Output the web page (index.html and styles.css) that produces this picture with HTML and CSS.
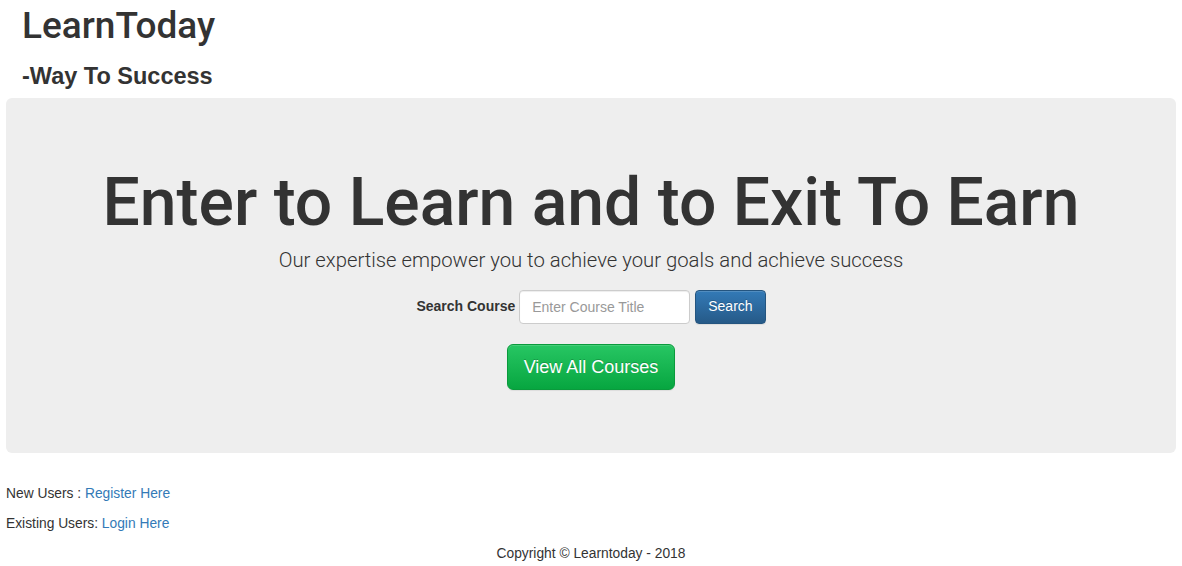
FILE: index.html
```html
<!DOCTYPE html>
<html>
<head>
<meta charset="utf-8">
<title>LearnToday</title>
<link rel="stylesheet" href="styles.css">
</head>
<body>
<header class="brand">
  <h1 class="brand-title">LearnToday</h1>
  <h3 class="brand-tag">-Way To Success</h3>
</header>
<section class="jumbotron">
  <h1 class="hero-title">Enter to Learn and to Exit To Earn</h1>
  <p class="hero-lead">Our expertise empower you to achieve your goals and achieve success</p>
  <form class="search-form">
    <label class="search-label" for="q">Search Course</label>
    <input class="search-input" id="q" type="text" placeholder="Enter Course Title">
    <button class="btn btn-primary" type="button">Search</button>
  </form>
  <div class="all-row">
    <a class="btn btn-success btn-lg" href="#">View All Courses</a>
  </div>
</section>
<footer class="foot">
  <p class="foot-line">New Users : <a href="#">Register Here</a></p>
  <p class="foot-line">Existing Users: <a href="#">Login Here</a></p>
  <p class="foot-copy">Copyright © Learntoday - 2018</p>
</footer>
</body>
</html>
```
FILE: styles.css
```css
* { box-sizing: border-box; }
html, body { margin: 0; padding: 0; }
body {
  font-family: "Liberation Sans", Arial, sans-serif;
  font-size: 14px;
  line-height: 1.42857;
  color: #333;
  background: #fff;
  padding: 0 6px;
}
a { color: #337ab7; text-decoration: none; }

.brand { padding: 6px 16px 0; }
.brand-title {
  margin: 0;
  font-family: Roboto, "Liberation Sans", sans-serif;
  font-size: 37px;
  font-weight: 500;
  line-height: 40px;
}
.brand-tag {
  margin: 18px 0 8px;
  font-size: 23.5px;
  font-weight: bold;
  line-height: 1.1;
}

.jumbotron {
  background: #eee;
  border-radius: 6px;
  padding: 70px 20px 63px;
  text-align: center;
}
.hero-title {
  margin: 0;
  font-family: Roboto, "Liberation Sans", sans-serif;
  font-size: 66px;
  font-weight: 500;
  line-height: 69px;
}
.hero-lead {
  margin: 8px 0 15px;
  font-family: Roboto, "Liberation Sans", sans-serif;
  font-weight: 300;
  font-size: 20.3px;
  line-height: 30px;
}
.search-form {
  display: flex;
  justify-content: center;
  align-items: center;
  height: 34px;
}
.search-label {
  font-weight: bold;
  margin-right: 4px;
}
.search-input {
  width: 171px;
  height: 34px;
  padding: 6px 12px;
  font: inherit;
  font-size: 14px;
  color: #555;
  background: #fff;
  border: 1px solid #ccc;
  border-radius: 4px;
  box-shadow: inset 0 1px 1px rgba(0,0,0,.075);
  margin-right: 5px;
}
.search-input::placeholder { color: #999; }

.btn {
  display: inline-block;
  font-family: inherit;
  font-size: 14px;
  line-height: 1.42857;
  padding: 6px 12px;
  border: 1px solid transparent;
  border-radius: 4px;
  color: #fff;
  white-space: nowrap;
  vertical-align: top;
  text-shadow: 0 -1px 0 rgba(0,0,0,.2);
  box-shadow: inset 0 1px 0 rgba(255,255,255,.15), 0 1px 1px rgba(0,0,0,.075);
  cursor: pointer;
}
.btn-primary {
  height: 34px;
  background: linear-gradient(#337ab7, #265a88);
  border-color: #245580;
}
.all-row { margin-top: 20px; display: flex; justify-content: center; }
.btn-lg {
  font-size: 18px;
  line-height: 24px;
  padding: 10px 0;
  border-radius: 6px;
  height: 46px;
  width: 168px;
  text-align: center;
}
.btn-success {
  background: linear-gradient(#27c663, #07a640);
  border-color: #0a9a3c;
}

.foot { padding-top: 26px; }
.foot-line, .foot-copy {
  margin: 0;
  font-size: 13.8px;
  line-height: 30px;
}
.foot-copy { text-align: center; }
```
